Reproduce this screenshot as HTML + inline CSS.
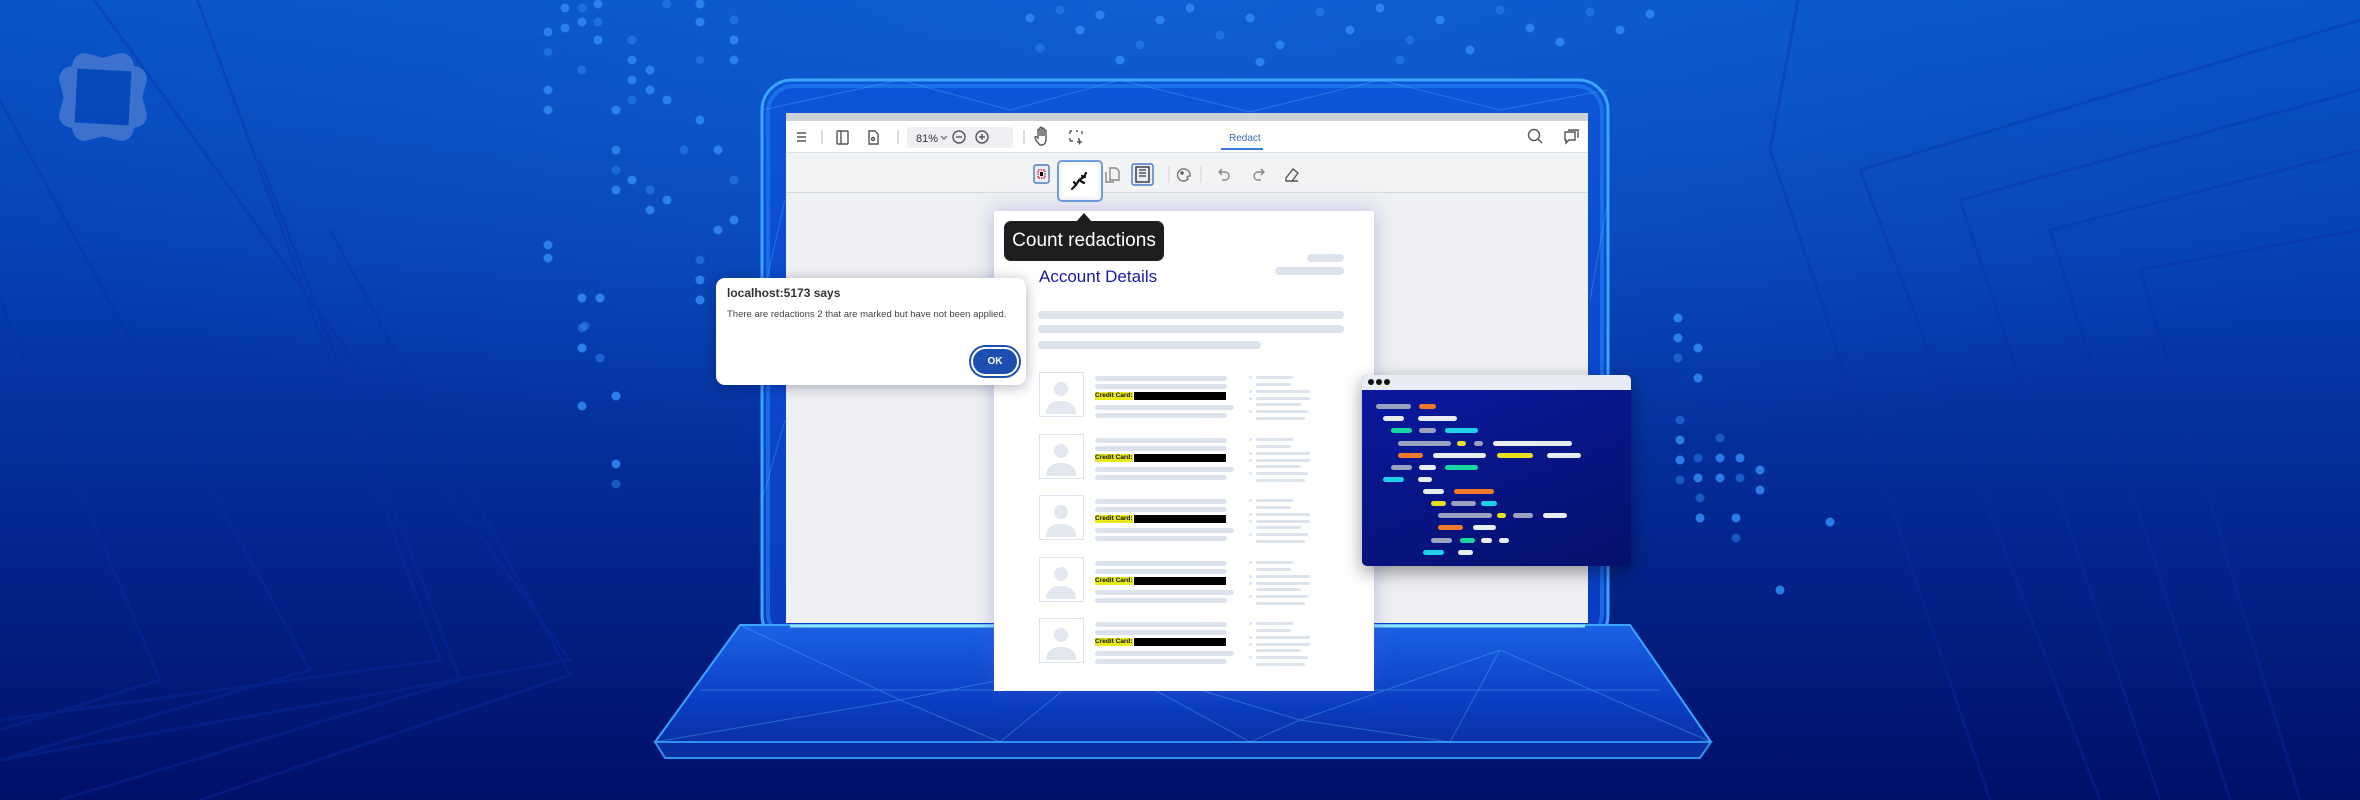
<!DOCTYPE html>
<html><head><meta charset="utf-8">
<style>
*{margin:0;padding:0;box-sizing:border-box}
body{width:2360px;height:800px;overflow:hidden;position:relative;font-family:"Liberation Sans",sans-serif;
background:linear-gradient(180deg,#0752c6 0%,#0642b4 30%,#03248c 70%,#010f68 100%);}
.abs{position:absolute}
.bar{position:absolute;background:#dde3ec;border-radius:4px}
.cb{position:absolute;height:5px;border-radius:3px}
</style></head><body>
<svg class="abs" style="left:0;top:0" width="2360" height="800">
 <defs>
  <radialGradient id="glow" cx="50%" cy="0%" r="60%"><stop offset="0" stop-color="#1a6ae0" stop-opacity=".5"/><stop offset="1" stop-color="#1a6ae0" stop-opacity="0"/></radialGradient>
  <linearGradient id="bez" x1="0" y1="0" x2="0" y2="1"><stop offset="0" stop-color="#0d55d8"/><stop offset="1" stop-color="#0a3cc0"/></linearGradient>
  <linearGradient id="base" x1="0" y1="0" x2="0" y2="1"><stop offset="0" stop-color="#1b62e6"/><stop offset=".6" stop-color="#0b3ec4"/><stop offset="1" stop-color="#0a2e9e"/></linearGradient>
 </defs>
 <rect width="2360" height="800" fill="url(#glow)"/>
 <g fill="none" stroke="#0a2ea8" stroke-width="3" opacity=".35">
  <path d="M80 -20 L570 660 L0 760"/><path d="M190 -20 L440 660 L0 720"/><path d="M0 100 L310 670 L0 760"/><path d="M0 300 L160 680 L0 730"/>
  <path d="M260 160 L460 680 L60 800"/><path d="M330 230 L570 675 L200 800"/>
  <path d="M2360 20 L1860 170 L2100 800"/><path d="M2360 90 L1960 200 L2160 800"/><path d="M2360 150 L2050 230 L2230 800"/><path d="M2360 230 L2140 270 L2300 800"/>
  <path d="M1800 -10 L1770 150 L1990 800"/>
 </g>
 <g id="dots" fill="#2f86f0"></g>
 <!-- laptop bezel -->
 <rect x="762" y="80" width="846" height="565" rx="30" fill="url(#bez)" stroke="#3aa6ff" stroke-width="3"/>
 <rect x="768" y="86" width="834" height="553" rx="26" fill="none" stroke="#1f7cf0" stroke-width="4" opacity=".7"/>
 <g stroke="#4fb4ff" stroke-width="1" opacity=".35" fill="none">
  <path d="M762 110 L900 80 L1010 110 L1120 80 L1250 112 L1380 80 L1500 110 L1608 90"/>
  <path d="M762 300 L785 200 M762 500 L785 420 M1590 300 L1608 200 M1590 500 L1608 430"/>
 </g>
 <!-- base -->
 <polygon points="740,625 1630,625 1711,742 1700,752 665,752 655,742" fill="url(#base)" stroke="#3aa6ff" stroke-width="2"/>
 <polygon points="655,742 1711,742 1700,758 665,758" fill="#0a2fa0" stroke="#2f90f0" stroke-width="2"/>
 <g stroke="#5cc4ff" stroke-width="1" opacity=".35" fill="none">
  <path d="M740 625 L900 700 L1100 660 L1300 720 L1500 650 L1711 742"/><path d="M655 742 L900 700 L1000 742 L1100 660 L1250 742 L1300 720 L1450 742 L1500 650"/>
  <path d="M700 690 L1660 690"/>
 </g>
 <line x1="790" y1="626" x2="1585" y2="626" stroke="#8fe4ff" stroke-width="3"/>
 <!-- logo -->
 <g transform="translate(103,97)" fill="#4a7bd2" opacity=".8">
  <rect x="-38" y="-38" width="76" height="76" rx="12" transform="rotate(15)"/>
  <rect x="-38" y="-38" width="76" height="76" rx="12" transform="rotate(-15)"/>
  <rect x="-27" y="-27" width="54" height="54" fill="#0648ba" transform="rotate(3)"/>
 </g>
</svg>

<!-- screen -->
<div class="abs" style="left:786px;top:113px;width:802px;height:510px;background:#eef0f3"></div>
<div class="abs" style="left:786px;top:113px;width:802px;height:8px;background:#cdd2d9"></div>
<div class="abs" style="left:786px;top:121px;width:802px;height:32px;background:#fff;border-bottom:1px solid #dde1e6"></div>
<div class="abs" style="left:786px;top:153px;width:802px;height:40px;background:#f1f3f5;border-bottom:1px solid #d6dae0"></div>
<svg class="abs" style="left:786px;top:121px" width="802" height="72" fill="none" stroke="#555" stroke-width="1.4">
 <path d="M11 12h9M11 16h9M11 20h9"/><line x1="36" y1="9" x2="36" y2="23" stroke="#ccc"/>
 <rect x="51" y="10" width="11" height="13" rx="1"/><line x1="55" y1="10" x2="55" y2="23"/>
 <path d="M83 10h6l3 3v10h-9z"/><circle cx="87" cy="18" r="1.5"/>
 <line x1="112" y1="9" x2="112" y2="23" stroke="#ccc"/>
 <rect x="121" y="6" width="106" height="21" rx="3" fill="#eef0f3" stroke="none"/>
 <text x="130" y="21" font-size="11" fill="#333" stroke="none" font-family="Liberation Sans">81%</text>
 <path d="M155 15l3 3 3-3" stroke="#777"/>
 <circle cx="173" cy="16" r="6"/><path d="M170 16h6"/><circle cx="196" cy="16" r="6"/><path d="M193 16h6M196 13v6"/>
 <line x1="238" y1="9" x2="238" y2="23" stroke="#ccc"/>
 <path d="M254 24c-3-3-5-6-5-8 1-1 2 0 3 1v-8c0-1 2-1 2 0v6-8c0-1 2-1 2 0v8-7c0-1 2-1 2 0v7-5c0-1 2-1 2 0v8c0 4-2 6-4 6z"/>
 <path d="M284 10h2M290 10h2M284 10v3M284 17v3M296 10v3M284 20h3M293 20v-3M291 21h5M293.5 18.5v5" />
 <text x="443" y="20" font-size="10" fill="#3a6db5" stroke="none" font-family="Liberation Sans">Redact</text>
 <line x1="435" y1="28" x2="477" y2="28" stroke="#3a7bd5" stroke-width="2"/>
 <circle cx="748" cy="14" r="5.5"/><path d="M752 18l4 4"/>
 <path d="M779 11h10v8h-6l-3 3v-3h-1z"/><path d="M782 9h10v8"/>
 <!-- row 2 -->
 <rect x="248" y="44" width="15" height="18" rx="2" fill="#e8eef8" stroke="#4a7cc0"/><rect x="252" y="49" width="7" height="8" stroke="#d22" stroke-dasharray="1.5 1"/><rect x="254" y="51" width="3" height="4" fill="#000" stroke="none"/>
 <path d="M324 47h6l3 3v9h-9z M320 51v10h8" stroke="#888"/>
 <rect x="346" y="43" width="21" height="21" rx="2" fill="#e8eef8" stroke="#4a7cc0"/><rect x="350" y="46" width="13" height="15" stroke="#333"/><path d="M353 49h7M353 52h7M353 55h7"/>
 <line x1="383" y1="45" x2="383" y2="62" stroke="#ddd"/>
 <path d="M398 48a6 6 0 1 0 4 10c-2-2 0-3 2-3a6 6 0 0 0-6-7z" stroke="#777"/><circle cx="396" cy="52" r="1" fill="#777"/>
 <line x1="415" y1="44" x2="415" y2="62" stroke="#ddd"/>
 <path d="M436 48l-3 3 3 3M433 51h6a4 4 0 0 1 0 8h-3" stroke="#888"/>
 <path d="M475 48l3 3-3 3M478 51h-6a4 4 0 0 0 0 8h3" stroke="#888"/>
 <path d="M500 57l7-9 5 4-6 8h-6zM503 60h9" stroke="#555"/>
</svg>
<!-- tooltip button -->
<div class="abs" style="left:1057px;top:160px;width:46px;height:42px;border:2px solid #6d9fd8;border-radius:5px;background:#f6f8fb"></div>
<div class="abs" style="left:1062px;top:165px;width:36px;height:32px;background:#fff"></div>
<svg class="abs" style="left:1066px;top:168px" width="28" height="26"><path d="M6 21l4-4 3-5 5-3 2-4M13 12l5 3M10 17l-2-3M16 8l3 1" stroke="#111" stroke-width="2.2" fill="none" stroke-linecap="round"/></svg>
<div class="abs" style="left:994px;top:211px;width:380px;height:480px;background:#fff;box-shadow:0 0 18px rgba(90,90,200,.35)"></div>
<div class="abs" style="left:1004px;top:221px;width:160px;height:40px;background:#1e1e1e;border-radius:7px;color:#fff;font-size:19px;line-height:40px;text-align:center;font-family:'Liberation Sans',sans-serif">Count redactions</div>
<div class="abs" style="left:1076px;top:213px;width:0;height:0;border-left:8px solid transparent;border-right:8px solid transparent;border-bottom:9px solid #1e1e1e"></div>
<!-- doc content -->
<div class="bar" style="left:1307px;top:254px;width:37px;height:8px"></div>
<div class="bar" style="left:1275px;top:267px;width:69px;height:8px"></div>
<div class="abs" style="left:1039px;top:267px;color:#1a1aa8;font-size:17px">Account Details</div>
<div class="bar" style="left:1038px;top:311px;width:306px;height:8px"></div>
<div class="bar" style="left:1038px;top:325px;width:306px;height:8px"></div>
<div class="bar" style="left:1038px;top:341px;width:223px;height:8px"></div>
<div id="rows"></div>
<!-- alert -->
<div class="abs" style="left:716px;top:278px;width:310px;height:107px;background:#fff;border-radius:9px;box-shadow:0 2px 14px rgba(0,0,40,.3)">
 <div class="abs" style="left:11px;top:8px;font-size:12px;font-weight:bold;color:#333">localhost:5173 says</div>
 <div class="abs" style="left:11px;top:31px;font-size:9.5px;color:#444">There are redactions 2 that are marked but have not been applied.</div>
 <div class="abs" style="left:255px;top:69px;width:48px;height:29px;border-radius:15px;background:#1d4fb3;border:2px solid #fff;box-shadow:0 0 0 2px #1d4fb3;color:#fff;font-size:10px;font-weight:bold;text-align:center;line-height:25px">OK</div>
</div>
<!-- code window -->
<div class="abs" style="left:1362px;top:375px;width:269px;height:191px;border-radius:5px;overflow:hidden;box-shadow:0 6px 18px rgba(0,0,0,.4);background:linear-gradient(160deg,#0a1aa0,#06106c)">
 <div style="height:15px;background:#e8edf5"></div>
 <div class="abs" style="left:6px;top:4px;width:6px;height:6px;border-radius:50%;background:#111"></div>
 <div class="abs" style="left:14px;top:4px;width:6px;height:6px;border-radius:50%;background:#111"></div>
 <div class="abs" style="left:22px;top:4px;width:6px;height:6px;border-radius:50%;background:#111"></div>
</div>
<div id="code"></div>
<script>
var C={g:'#9aa2c0',o:'#f07a2a',w:'#e8ecf5',c:'#1ed0e8',n:'#19d6a0',y:'#e6e01a'};
var rows=[[406,[[1376,1411,'g'],[1419,1436,'o']]],[418,[[1383,1404,'w'],[1418,1457,'w']]],[430,[[1391,1412,'n'],[1419,1436,'g'],[1445,1478,'c']]],
[443,[[1398,1451,'g'],[1457,1466,'y'],[1474,1483,'g'],[1493,1572,'w']]],[455,[[1398,1423,'o'],[1433,1486,'w'],[1497,1533,'y'],[1547,1581,'w']]],
[467,[[1391,1412,'g'],[1419,1436,'w'],[1445,1478,'n']]],[479,[[1383,1404,'c'],[1418,1432,'w']]],[491,[[1423,1444,'w'],[1454,1494,'o']]],
[503,[[1431,1446,'y'],[1451,1476,'g'],[1481,1497,'c']]],[515,[[1438,1492,'g'],[1497,1506,'y'],[1513,1533,'g'],[1543,1567,'w']]],
[527,[[1438,1463,'o'],[1473,1496,'w']]],[540,[[1431,1452,'g'],[1460,1475,'n'],[1481,1492,'w'],[1499,1509,'w']]],[552,[[1423,1444,'c'],[1458,1473,'w']]]];
var h='';rows.forEach(function(r){r[1].forEach(function(b){h+='<div class="cb" style="left:'+b[0]+'px;top:'+(r[0]-2)+'px;width:'+(b[1]-b[0])+'px;background:'+C[b[2]]+'"></div>';});});
document.getElementById('code').innerHTML=h;
var d='';for(var i=0;i<5;i++){var y=372+i*61.5;
d+='<div class="abs" style="left:1039px;top:'+y+'px;width:45px;height:45px;border:1.5px solid #dde3f0;background:#fff"><svg width="42" height="42"><circle cx="21" cy="16" r="7" fill="#e3e7f0"/><path d="M6 41c0-9 6-13 15-13s15 4 15 13z" fill="#e3e7f0"/></svg></div>';
d+='<div class="bar" style="left:1095px;top:'+(y+4)+'px;width:132px;height:5px"></div><div class="bar" style="left:1095px;top:'+(y+12)+'px;width:132px;height:5px"></div>';
d+='<div class="abs" style="left:1095px;top:'+(y+20)+'px;width:38px;height:8px;background:#e8e81a;font-size:6.5px;line-height:8px;color:#111;font-weight:bold">Credit Card:</div><div class="abs" style="left:1134px;top:'+(y+20)+'px;width:92px;height:8px;background:#000"></div>';
d+='<div class="bar" style="left:1095px;top:'+(y+33)+'px;width:139px;height:5px"></div><div class="bar" style="left:1095px;top:'+(y+41)+'px;width:132px;height:5px"></div>';
[[4,37,1],[11,35,0],[18,54,1],[25,54,1],[31,45,0],[38,52,1],[45,49,0]].forEach(function(l){d+='<div class="bar" style="left:1256px;top:'+(y+l[0])+'px;width:'+l[1]+'px;height:3px;border-radius:2px"></div>';if(l[2])d+='<div class="abs" style="left:1249px;top:'+(y+l[0])+'px;width:3px;height:3px;border-radius:50%;background:#dde3ec"></div>';});}
document.getElementById('rows').innerHTML=d;
var pts=[[565,8],[565,28],[582,8],[582,22],[598,4],[598,22],[598,40],[548,32],[548,52],[548,90],[548,110],[582,70],[616,110],[616,150],[616,170],[616,190],[632,180],[632,40],[632,60],[632,80],[632,100],[650,70],[650,90],[650,190],[650,210],[667,100],[667,4],[700,4],[700,22],[700,60],[718,150],[718,230],[734,20],[734,40],[734,60],[734,180],[734,220],[700,120],[700,260],[700,280],[700,300],[684,150],[667,200],[582,298],[582,328],[582,348],[600,298],[600,358],[548,245],[548,258],[585,326],[616,396],[616,464],[616,484],[582,406],
[1030,18],[1060,10],[1080,30],[1100,15],[1140,45],[1160,20],[1190,8],[1220,35],[1250,18],[1280,45],[1320,12],[1350,30],[1380,8],[1410,40],[1440,20],[1470,50],[1500,10],[1530,28],[1560,42],[1590,12],[1620,30],[1650,14],[1040,48],[1120,60],[1260,62],[1400,60],
[1678,318],[1678,338],[1678,358],[1698,348],[1698,378],[1720,438],[1720,458],[1720,478],[1698,458],[1698,478],[1740,458],[1740,478],[1760,470],[1760,490],[1680,420],[1680,440],[1680,460],[1680,480],[1780,590],[1830,522],[1700,498],[1700,518],[1736,518],[1736,538]];
var s='';pts.forEach(function(p,i){s+='<circle cx="'+p[0]+'" cy="'+p[1]+'" r="4.5" opacity="'+(i%3==2?0.5:0.9)+'"/>';});
document.getElementById('dots').innerHTML=s;
</script>
</body></html>
